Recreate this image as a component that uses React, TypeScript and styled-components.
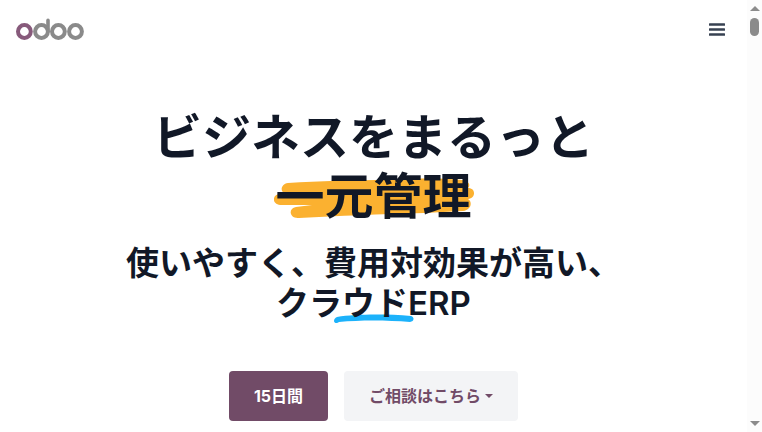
import React from "react";
import styled, { createGlobalStyle } from "styled-components";

const GlobalStyle = createGlobalStyle`
  *, *::before, *::after { box-sizing: border-box; }
  body {
    margin: 0;
    background: #fff;
    color: #111827;
    font-family: Inter, "Noto Sans CJK JP", sans-serif;
    overflow: hidden;
  }
`;

const Shell = styled.div`
  display: flex;
  height: 100vh;
`;

const Page = styled.div`
  flex: 1;
  min-width: 0;
  overflow: hidden;
`;

const Header = styled.header`
  display: flex;
  align-items: center;
  justify-content: space-between;
  height: 60px;
  padding: 0 16px;
`;

const LogoLink = styled.a`
  display: flex;
  svg { display: block; }
`;

const MenuButton = styled.button`
  display: flex;
  padding: 6px;
  border: 0;
  background: none;
  color: #374151;
  cursor: pointer;
`;

const Hero = styled.main`
  display: flex;
  flex-direction: column;
  align-items: center;
  padding: 48px 16px 10px;
  text-align: center;
`;

const Title = styled.h1`
  margin: 0;
  font-size: 49px;
  line-height: 59px;
  font-weight: 700;
`;

const Subtitle = styled.h2`
  margin: 17px 0 0;
  font-size: 33px;
  line-height: 40px;
  font-weight: 600;
  white-space: nowrap;
`;

const Marked = styled.span`
  position: relative;
  display: inline-block;
  isolation: isolate;
`;

const Highlight = styled.svg`
  position: absolute;
  z-index: -1;
  left: -1px;
  top: 10px;
  width: 200px;
  height: 42px;
`;

const Underline = styled.svg`
  position: absolute;
  z-index: -1;
  left: -8px;
  bottom: -1px;
  width: 80px;
  height: 10px;
`;

const Actions = styled.div`
  display: flex;
  gap: 16px;
  margin-top: 48px;
`;

const ActionButton = styled.button<{ $primary?: boolean }>`
  display: flex;
  align-items: center;
  gap: 4px;
  height: 50px;
  padding: 0 25px;
  border: 0;
  border-radius: 4px;
  background: ${(p) => (p.$primary ? "#714b67" : "#f3f4f6")};
  color: ${(p) => (p.$primary ? "#fff" : "#714b67")};
  font-family: inherit;
  font-size: 16px;
  font-weight: ${(p) => (p.$primary ? 700 : 600)};
  line-height: 24px;
  cursor: pointer;
`;

const Caret = styled.span`
  border: 4px solid transparent;
  border-top-color: currentColor;
  border-bottom: 0;
`;

const ScrollTrack = styled.div`
  display: flex;
  flex-direction: column;
  align-items: center;
  width: 15px;
  padding: 6px 0;
  background: #fcfcfc;
`;

const ScrollArrow = styled.svg`
  width: 10px;
  height: 5px;
  fill: #8b8b8b;
`;

const ScrollThumb = styled.div`
  width: 9px;
  height: 18px;
  margin: 7px 0 auto;
  border-radius: 5px;
  background: #8b8b8b;
`;

function Logo() {
  return (
    <svg width="68" height="24" viewBox="0 0 68 24" fill="none" strokeWidth="4" aria-hidden="true">
      <circle cx="25.5" cy="13.5" r="6.4" stroke="#8a8a8a" />
      <path d="M32 13.5V2.4" stroke="#8a8a8a" strokeWidth="3.6" strokeLinecap="round" />
      <circle cx="42.4" cy="13.5" r="6.4" stroke="#8a8a8a" />
      <circle cx="59.5" cy="13.5" r="6.4" stroke="#8a8a8a" />
      <circle cx="8.4" cy="13.5" r="6.4" stroke="#875a7b" />
    </svg>
  );
}

export default function App() {
  return (
    <>
      <GlobalStyle />
      <Shell>
        <Page>
          <Header>
            <LogoLink href="#" aria-label="Odoo">
              <Logo />
            </LogoLink>
            <MenuButton type="button" aria-label="メニュー">
              <svg width="16" height="14" viewBox="0 0 16 14" fill="currentColor" aria-hidden="true">
                <rect y="0.2" width="16" height="2.6" rx="0.5" />
                <rect y="5.2" width="16" height="2.6" rx="0.5" />
                <rect y="10.2" width="16" height="2.6" rx="0.5" />
              </svg>
            </MenuButton>
          </Header>
          <Hero>
            <Title>
              ビジネスをまるっと
              <br />
              <Marked>
                一元管理
                <Highlight viewBox="0 0 200 42" aria-hidden="true">
                  <path
                    fill="#fbb130"
                    d="M14 6 C45 4 80 3 115 3 C145 1 170 1 188 3 C195 4 197 8 194 11 C202 11 202 21 194 22 C199 25 197 33 189 34 L150 36 C105 37 65 39 25 41 C15 42 14 31 22 30 L38 28 L8 28 C-3 28 -2 17 6 17 L10 16 C6 14 7 7 14 6 Z"
                  />
                </Highlight>
              </Marked>
            </Title>
            <Subtitle>
              使いやすく、費用対効果が高い、
              <br />
              クラ
              <Marked>
                ウド
                <Underline viewBox="0 0 80 10" aria-hidden="true">
                  <path
                    fill="#1cb2fb"
                    d="M3 3 C22 0 52 0 77 2 C81 3 80 8 76 8 C52 6 26 6 5 8 C3 10 0 9 0 7 C0 5 1 4 3 3 Z"
                  />
                </Underline>
              </Marked>
              ERP
            </Subtitle>
            <Actions>
              <ActionButton type="button" $primary>
                15日間
              </ActionButton>
              <ActionButton type="button" aria-haspopup="menu">
                ご相談はこちら
                <Caret />
              </ActionButton>
            </Actions>
          </Hero>
        </Page>
        <ScrollTrack aria-hidden="true">
          <ScrollArrow viewBox="0 0 10 5">
            <path d="M0 5 5 0 10 5Z" />
          </ScrollArrow>
          <ScrollThumb />
          <ScrollArrow viewBox="0 0 10 5">
            <path d="M0 0 5 5 10 0Z" />
          </ScrollArrow>
        </ScrollTrack>
      </Shell>
    </>
  );
}
